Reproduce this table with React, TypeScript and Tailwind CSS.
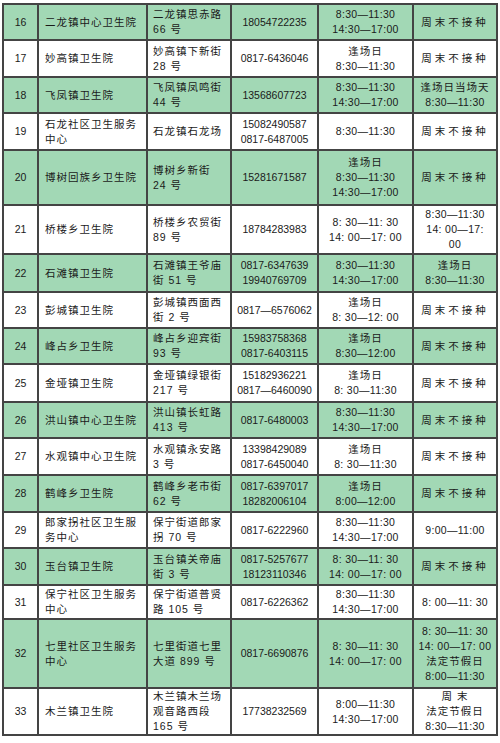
import React from "react";

type Row = {
  n: number;
  name: string[];
  addr: string[];
  phone: string[];
  time: string[];
  week: string[];
  h: string;
};

const rows: Row[] = [
  { n: 16, name: ["二龙镇中心卫生院"], addr: ["二龙镇思赤路", "66 号"], phone: ["18054722235"], time: ["8:30—11:30", "14:30—17:00"], week: ["周末不接种"], h: "h-[36px]" },
  { n: 17, name: ["妙高镇卫生院"], addr: ["妙高镇下新街", "28 号"], phone: ["0817-6436046"], time: ["逢场日", "8:30—11:30"], week: ["周末不接种"], h: "h-[37px]" },
  { n: 18, name: ["飞凤镇卫生院"], addr: ["飞凤镇凤鸣街", "44 号"], phone: ["13568607723"], time: ["8:30—11:30", "14:30—17:00"], week: ["逢场日当场天", "8:30—11:30"], h: "h-[36px]" },
  { n: 19, name: ["石龙社区卫生服务", "中心"], addr: ["石龙镇石龙场"], phone: ["15082490587", "0817-6487005"], time: ["8:30—11:30"], week: ["周末不接种"], h: "h-[37px]" },
  { n: 20, name: ["博树回族乡卫生院"], addr: ["博树乡新街", "24 号"], phone: ["15281671587"], time: ["逢场日", "8:30—11:30", "14:30—17:00"], week: ["周末不接种"], h: "h-[55px]" },
  { n: 21, name: ["桥楼乡卫生院"], addr: ["桥楼乡农贸街", "89 号"], phone: ["18784283983"], time: ["8: 30—11: 30", "14: 00—17: 00"], week: ["8:30—11:30", "14: 00—17:", "00"], h: "h-[49px]" },
  { n: 22, name: ["石滩镇卫生院"], addr: ["石滩镇王爷庙", "街 51 号"], phone: ["0817-6347639", "19940769709"], time: ["8:30—11:30", "14:30—17:00"], week: ["逢场日", "8:30—11:30"], h: "h-[38px]" },
  { n: 23, name: ["彭城镇卫生院"], addr: ["彭城镇西面西", "街 2 号"], phone: ["0817—6576062"], time: ["逢场日", "8: 30—12: 00"], week: ["周末不接种"], h: "h-[36px]" },
  { n: 24, name: ["峰占乡卫生院"], addr: ["峰占乡迎宾街", "93 号"], phone: ["15983758368", "0817-6403115"], time: ["逢场日", "8:30—12:00"], week: ["周末不接种"], h: "h-[36px]" },
  { n: 25, name: ["金垭镇卫生院"], addr: ["金垭镇绿银街", "217 号"], phone: ["15182936221", "0817—6460090"], time: ["逢场日", "8: 30—11:30"], week: ["周末不接种"], h: "h-[38px]" },
  { n: 26, name: ["洪山镇中心卫生院"], addr: ["洪山镇长虹路", "413 号"], phone: ["0817-6480003"], time: ["8:30—11:30", "14:30—17:00"], week: ["周末不接种"], h: "h-[36px]" },
  { n: 27, name: ["水观镇中心卫生院"], addr: ["水观镇永安路", "3 号"], phone: ["13398429089", "0817-6450040"], time: ["逢场日", "8: 30—11:30"], week: ["周末不接种"], h: "h-[37px]" },
  { n: 28, name: ["鹤峰乡卫生院"], addr: ["鹤峰乡老市街", "62 号"], phone: ["0817-6397017", "18282006104"], time: ["逢场日", "8:00—12:00"], week: ["周末不接种"], h: "h-[37px]" },
  { n: 29, name: ["郎家拐社区卫生服", "务中心"], addr: ["保宁街道郎家", "拐 70 号"], phone: ["0817-6222960"], time: ["8:30—11:30", "14:30—17:00"], week: ["9:00—11:00"], h: "h-[36px]" },
  { n: 30, name: ["玉台镇卫生院"], addr: ["玉台镇关帝庙", "街 3 号"], phone: ["0817-5257677", "18123110346"], time: ["8: 30—11: 30", "14: 00—17: 00"], week: ["周末不接种"], h: "h-[37px]" },
  { n: 31, name: ["保宁社区卫生服务", "中心"], addr: ["保宁街道普贤", "路 105 号"], phone: ["0817-6226362"], time: ["8:30—11:30", "14:30—17:00"], week: ["8: 00—11: 30"], h: "h-[34px]" },
  { n: 32, name: ["七里社区卫生服务", "中心"], addr: ["七里街道七里", "大道 899 号"], phone: ["0817-6690876"], time: ["8: 30—11: 30", "14: 00—17: 00"], week: ["8: 30—11: 30", "14: 00—17: 00", "法定节假日", "8:00—11:30"], h: "h-[69px]" },
  { n: 33, name: ["木兰镇卫生院"], addr: ["木兰镇木兰场", "观音路西段", "165 号"], phone: ["17738232569"], time: ["8:00—11:30", "14:30—17:00"], week: ["周 末", "法定节假日", "8:30—11:30"], h: "h-[47px]" },
];

const cjk = /[\u4e00-\u9fff]/;

function Lines({ lines, wide }: { lines: string[]; wide?: boolean }) {
  return (
    <>
      {lines.map((l, i) => (
        <div
          key={i}
          className={
            l === "周末不接种"
              ? "tracking-[3px] whitespace-nowrap"
              : cjk.test(l)
              ? "tracking-[1px] whitespace-nowrap"
              : wide
              ? "tracking-[0.3px] whitespace-nowrap"
              : "whitespace-nowrap"
          }
        >
          {l}
        </div>
      ))}
    </>
  );
}

export default function App() {
  const td = "border-2 border-[#444444] p-0 align-middle";
  return (
    <div className="w-[500px] h-[743px] bg-white pt-[3px] pl-[2px] overflow-hidden">
      <table
        className="table-fixed border-collapse w-[494px] text-[10.5px] leading-[15px] text-[#1a1a1a]"
        style={{ fontFamily: '"Liberation Sans", "Noto Sans CJK SC", sans-serif' }}
      >
        <colgroup>
          <col className="w-[35px]" />
          <col className="w-[109px]" />
          <col className="w-[84px]" />
          <col className="w-[87px]" />
          <col className="w-[95px]" />
          <col className="w-[84px]" />
        </colgroup>
        <tbody>
          {rows.map((r, i) => (
            <tr key={r.n} className={`${r.h} ${i % 2 === 0 ? "bg-[#a2d8b5]" : "bg-white"}`}>
              <td className={`${td} text-center`}>{r.n}</td>
              <td className={`${td} text-left pl-[6px]`}>
                <Lines lines={r.name} />
              </td>
              <td className={`${td} text-left pl-[5px]`}>
                <Lines lines={r.addr} />
              </td>
              <td className={`${td} text-center`}>
                <Lines lines={r.phone} />
              </td>
              <td className={`${td} text-center`}>
                <Lines lines={r.time} wide />
              </td>
              <td className={`${td} text-center`}>
                <Lines lines={r.week} wide />
              </td>
            </tr>
          ))}
        </tbody>
      </table>
    </div>
  );
}
